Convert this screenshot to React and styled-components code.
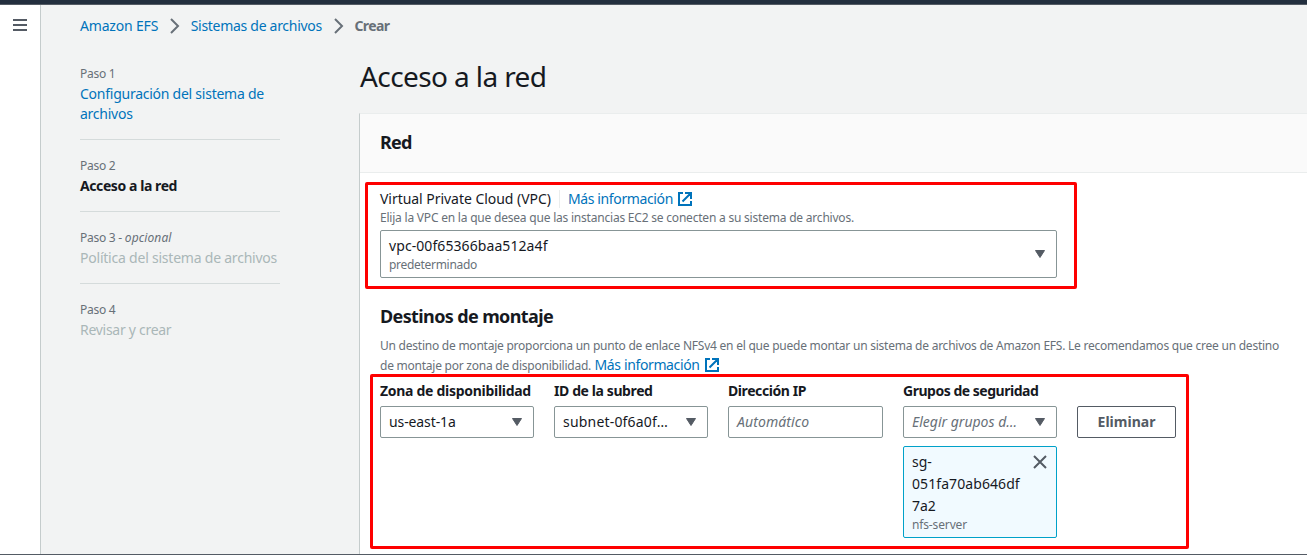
import React from "react";
import styled, { createGlobalStyle, css } from "styled-components";

const GlobalStyle = createGlobalStyle`
  *, *::before, *::after { box-sizing: border-box; }
  body {
    margin: 0;
    font-family: "Noto Sans", "Open Sans", sans-serif;
    font-size: 14px;
    line-height: 22px;
    color: #16191f;
    background: #f2f3f3;
    overflow: hidden;
  }
`;

const Screen = styled.div`
  display: flex;
  flex-direction: column;
  width: 1307px;
  height: 555px;
  overflow: hidden;
  border-bottom: 1px solid #545b64;
`;

const TopBar = styled.header`
  flex: none;
  height: 5px;
  background: #232f3e;
  border-bottom: 1px solid #545b64;
`;

const Body = styled.div`
  flex: 1;
  min-height: 0;
  display: flex;
`;

const Rail = styled.aside`
  flex: none;
  width: 41px;
  padding: 14px 0 0 13px;
  background: #fff;
  border-right: 1px solid #c5cccc;
  svg { display: block; }
`;

const Content = styled.div`
  flex: 1;
  min-width: 0;
  padding: 10px 0 0 39px;
`;

const Breadcrumbs = styled.nav`
  display: flex;
  align-items: center;
  height: 22px;
`;

const Text = styled.span`
  letter-spacing: ${(p) => p.$track || 0}px;
  white-space: nowrap;
`;

const Link = styled(Text).attrs({ as: "a" })`
  color: #0073bb;
`;

const Current = styled(Text)`
  color: #687078;
  font-weight: 700;
`;

const Separator = styled.svg`
  flex: none;
  margin: 0 10.5px 0 12px;
`;

const Columns = styled.div`
  display: flex;
`;

const Steps = styled.ol`
  flex: none;
  width: 200px;
  margin: 27px 79px 0 0;
  padding: 0;
  list-style: none;
`;

const Step = styled.li`
  padding-bottom: 15px;
  line-height: 20px;
  & + & {
    padding-top: 16px;
    border-top: 1px solid #d5dbdb;
  }
`;

const StepNumber = styled.div`
  font-size: 12px;
  letter-spacing: -0.25px;
  color: #687078;
  i { letter-spacing: 0.1px; }
`;

const stepTones = {
  link: css`color: #0073bb;`,
  active: css`color: #16191f; font-weight: 700;`,
  disabled: css`color: #aab7b8;`,
};

const StepTitle = styled.div`
  letter-spacing: ${(p) => p.$track}px;
  ${(p) => stepTones[p.$tone]}
`;

const Main = styled.main`
  flex: 1;
  min-width: 0;
`;

const Title = styled.h1`
  margin: 21px 0 19px 1px;
  font-size: 28px;
  line-height: 36px;
  font-weight: 400;
  letter-spacing: -0.6px;
`;

const Card = styled.section`
  height: 460px;
  background: #fff;
  border-left: 1px solid #c5cccc;
  border-top: 1px solid #eaeded;
`;

const CardHeader = styled.div`
  padding: 17px 20px;
  height: 59px;
  background: #fafafa;
  border-bottom: 1px solid #eaeded;
`;

const Heading = styled.h2`
  margin: 0;
  font-size: 18px;
  line-height: 22px;
  font-weight: 700;
  letter-spacing: ${(p) => p.$track}px;
`;

const CardBody = styled.div`
  padding: 15px 20px 0;
`;

/* Red rectangle drawn around a group of controls */
const Highlight = styled.div`
  position: relative;
  &::after {
    content: "";
    position: absolute;
    inset: ${(p) => p.$inset};
    border: 3px solid #fe0000;
    border-radius: 2px;
    pointer-events: none;
  }
`;

const VpcField = styled(Highlight)`
  width: 677px;
`;

const LabelRow = styled.div`
  display: flex;
  align-items: center;
  height: 22px;
`;

const Divider = styled.span`
  width: 1px;
  height: 18px;
  margin: 0 8px;
  background: #eaeded;
`;

const ExternalSvg = styled.svg`
  flex: none;
  margin-left: 5px;
  vertical-align: ${(p) => p.$shift || 0}px;
`;

const Hint = styled.div`
  font-size: 12px;
  line-height: 16px;
  letter-spacing: ${(p) => p.$track || 0}px;
  color: #687078;
  white-space: nowrap;
`;

const Control = styled.div`
  display: flex;
  align-items: center;
  justify-content: space-between;
  height: ${(p) => (p.$tall ? 48 : 32)}px;
  padding: 0 11px 0 8px;
  background: #fff;
  border: 1px solid #879596;
  border-radius: 2px;
  svg { flex: none; }
`;

const VpcControl = styled(Control)`
  margin-top: 4px;
`;

const Placeholder = styled(Text)`
  font-style: italic;
  color: #687078;
`;

const Targets = styled.div`
  margin-top: 27px;
`;

const Description = styled.p`
  margin: 9px 0 0;
  font-size: 12px;
  line-height: 20px;
  color: #687078;
  white-space: nowrap;
`;

const DescriptionLine = styled.span`
  display: block;
  height: 20px;
`;

const InlineLink = styled(Link)`
  margin-left: 3.5px;
  font-size: 14px;
  line-height: 16px;
  vertical-align: 0.5px;
`;

const TargetRow = styled(Highlight)`
  display: grid;
  grid-template-columns: 154px 154px 155px 154px 99px;
  column-gap: 20px;
  align-items: start;
  width: max-content;
  margin-top: 4px;
`;

const FieldLabel = styled.div`
  height: 22px;
  margin-bottom: 4px;
  font-weight: 700;
  letter-spacing: ${(p) => p.$track}px;
  white-space: nowrap;
`;

const RemoveButton = styled.button`
  height: 32px;
  margin-top: 26px;
  padding: 0;
  font: inherit;
  font-weight: 700;
  color: #545b64;
  background: #fff;
  border: 1px solid #545b64;
  border-radius: 2px;
`;

const Token = styled.div`
  display: flex;
  justify-content: space-between;
  height: 92px;
  margin-top: 8px;
  padding: 4px 9px 0 8px;
  background: #f1faff;
  border: 1px solid #00a1c9;
  border-radius: 2px;
  svg { flex: none; margin-top: 4px; }
`;

const TokenText = styled.div`
  width: 112px;
  margin-right: -20px;
`;

const Caret = () => (
  <svg width="10" height="8" viewBox="0 0 10 8">
    <path d="M0.5 0.5h9L5 7.5z" fill="#545b64" stroke="#545b64" strokeLinejoin="round" />
  </svg>
);

const Chevron = () => (
  <Separator width="10" height="16" viewBox="0 0 10 16" fill="none" stroke="#687078" strokeWidth="2">
    <path d="M1 1l7 7-7 7" />
  </Separator>
);

const External = (props) => (
  <ExternalSvg width="14" height="14" viewBox="0 0 14 14" fill="none" stroke="#0073bb" strokeWidth="2" {...props}>
    <path d="M5 1H1v12h12V9M7 1h6v6M13 1L4.5 9.5" />
  </ExternalSvg>
);

const steps = [
  { n: "Paso 1", title: <>Configuración del sistema de<br />archivos</>, tone: "link", track: -0.25 },
  { n: "Paso 2", title: "Acceso a la red", tone: "active", track: -0.42 },
  { n: <>Paso 3 - <i>opcional</i></>, title: "Política del sistema de archivos", tone: "disabled", track: -0.22 },
  { n: "Paso 4", title: "Revisar y crear", tone: "disabled", track: -0.28 },
];

export default function App() {
  return (
    <>
      <GlobalStyle />
      <Screen>
        <TopBar />
        <Body>
          <Rail>
            <svg width="14" height="12" viewBox="0 0 14 12" fill="none" stroke="#545b64" strokeWidth="2">
              <path d="M0 1h14M0 6h14M0 11h14" />
            </svg>
          </Rail>
          <Content>
            <Breadcrumbs>
              <Link $track={-0.18}>Amazon EFS</Link>
              <Chevron />
              <Link $track={-0.29}>Sistemas de archivos</Link>
              <Chevron />
              <Current $track={-0.6}>Crear</Current>
            </Breadcrumbs>
            <Columns>
              <Steps>
                {steps.map((s, i) => (
                  <Step key={i}>
                    <StepNumber>{s.n}</StepNumber>
                    <StepTitle $tone={s.tone} $track={s.track}>{s.title}</StepTitle>
                  </Step>
                ))}
              </Steps>
              <Main>
                <Title>Acceso a la red</Title>
                <Card>
                  <CardHeader>
                    <Heading $track={-0.8}>Red</Heading>
                  </CardHeader>
                  <CardBody>
                    <VpcField $inset="-6px -20px -11px -15px">
                      <LabelRow>
                        <Text $track={-0.04}>Virtual Private Cloud (VPC)</Text>
                        <Divider />
                        <Link $track={-0.37}>Más información</Link>
                        <External />
                      </LabelRow>
                      <Hint $track={-0.21}>
                        Elija la VPC en la que desea que las instancias EC2 se conecten a su sistema de archivos.
                      </Hint>
                      <VpcControl $tall>
                        <div>
                          <Text $track={0.08}>vpc-00f65366baa512a4f</Text>
                          <Hint $track={-0.3}>predeterminado</Hint>
                        </div>
                        <Caret />
                      </VpcControl>
                    </VpcField>
                    <Targets>
                      <Heading $track={-0.62}>Destinos de montaje</Heading>
                      <Description>
                        <DescriptionLine>
                          <Text $track={-0.237}>
                            Un destino de montaje proporciona un punto de enlace NFSv4 en el que puede montar un sistema de archivos de Amazon EFS. Le recomendamos que cree un destino
                          </Text>
                        </DescriptionLine>
                        <DescriptionLine>
                          <Text $track={-0.24}>de montaje por zona de disponibilidad.</Text>
                          <InlineLink $track={-0.37}>Más información</InlineLink>
                          <External $shift={-1.5} />
                        </DescriptionLine>
                      </Description>
                      <TargetRow $inset="-6px -13px -11px -10px">
                        <div>
                          <FieldLabel $track={-0.29}>Zona de disponibilidad</FieldLabel>
                          <Control>
                            <Text $track={-0.1}>us-east-1a</Text>
                            <Caret />
                          </Control>
                        </div>
                        <div>
                          <FieldLabel $track={-0.4}>ID de la subred</FieldLabel>
                          <Control>
                            <Text $track={0.19}>subnet-0f6a0f…</Text>
                            <Caret />
                          </Control>
                        </div>
                        <div>
                          <FieldLabel $track={-0.42}>Dirección IP</FieldLabel>
                          <Control>
                            <Placeholder $track={0.1}>Automático</Placeholder>
                          </Control>
                        </div>
                        <div>
                          <FieldLabel $track={-0.48}>Grupos de seguridad</FieldLabel>
                          <Control>
                            <Placeholder>Elegir grupos d…</Placeholder>
                            <Caret />
                          </Control>
                          <Token>
                            <TokenText>
                              <Text>sg-</Text><br />
                              <Text $track={0.08}>051fa70ab646df</Text><br />
                              <Text>7a2</Text>
                              <Hint $track={-0.14}>nfs-server</Hint>
                            </TokenText>
                            <svg width="14" height="14" viewBox="0 0 14 14" stroke="#545b64" strokeWidth="2">
                              <path d="M1 1l12 12M13 1L1 13" />
                            </svg>
                          </Token>
                        </div>
                        <RemoveButton>Eliminar</RemoveButton>
                      </TargetRow>
                    </Targets>
                  </CardBody>
                </Card>
              </Main>
            </Columns>
          </Content>
        </Body>
      </Screen>
    </>
  );
}
